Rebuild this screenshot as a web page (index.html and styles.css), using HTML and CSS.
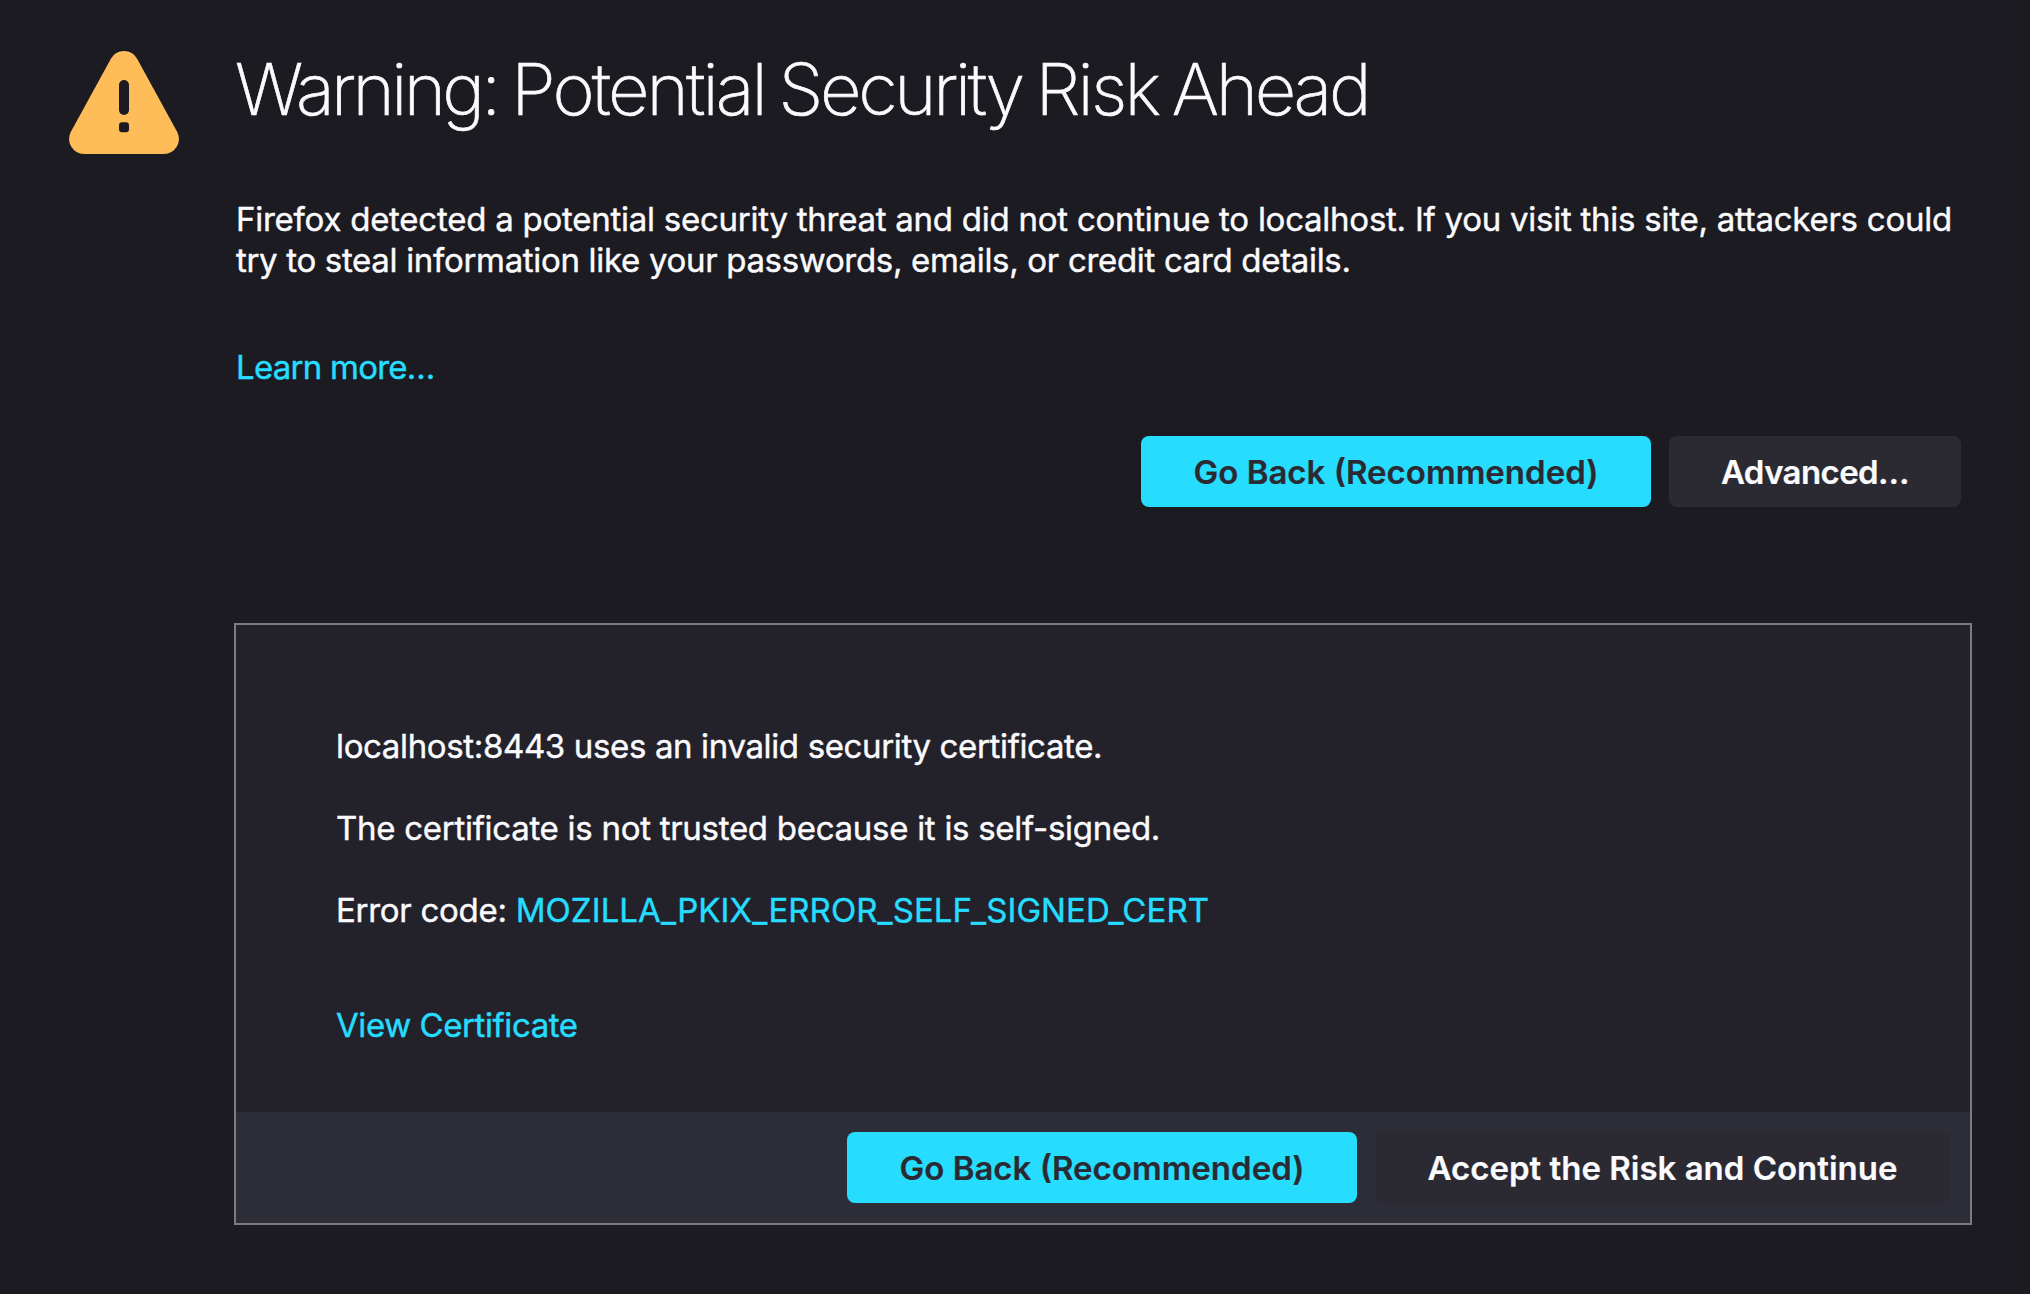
FILE: index.html
```
<!DOCTYPE html>
<html lang="en">
<head>
<meta charset="utf-8">
<title>Warning: Potential Security Risk Ahead</title>
<link rel="stylesheet" href="styles.css">
</head>
<body>
<main class="page">
  <svg class="warning-icon" viewBox="0 0 110 104" aria-hidden="true">
    <path class="triangle" d="M41.9 7.8A15 15 0 0 1 68.1 7.8L108.1 80.8A15 15 0 0 1 95 103H15A15 15 0 0 1 1.9 80.8Z"/>
    <rect class="mark" x="50" y="29" width="10" height="35" rx="5"/>
    <rect class="mark" x="50" y="71.3" width="10" height="10" rx="3"/>
  </svg>
  <div class="content">
    <h1 class="title"><span class="tight">Warning:</span> <span class="loose">Potential</span> Security <span class="loose">Risk</span> Ahead</h1>
    <p class="intro">Firefox detected a potential security threat and did not continue to localhost. If you visit this site, attackers could<br><span class="second-line">try to steal information like your passwords, emails, or credit card details.</span></p>
    <a class="link learn">Learn more…</a>
    <div class="actions">
      <button class="button primary">Go Back (Recommended)</button>
      <button class="button advanced">Advanced…</button>
    </div>
    <section class="panel">
      <div class="details">
        <p class="host">localhost:8443 uses an invalid security certificate.</p>
        <p>The certificate is not trusted because it is self-signed.</p>
        <p>Error code: <a class="link code">MOZILLA_PKIX_ERROR_SELF_SIGNED_CERT</a></p>
        <p class="certificate"><a class="link">View Certificate</a></p>
      </div>
      <div class="panel-actions">
        <button class="button primary">Go Back (Recommended)</button>
        <button class="button accept">Accept the Risk and Continue</button>
      </div>
    </section>
  </div>
</main>
</body>
</html>
```
FILE: styles.css
```
* { box-sizing: border-box; }
body { margin: 0; background: #1c1b22; color: #fbfbfe; font: 400 33px/41px Inter, sans-serif; letter-spacing: -0.28px; -webkit-text-stroke: 0.4px currentColor; }
.page { display: flex; height: 1294px; padding: 51px 58px 0 69px; overflow: hidden; }
.warning-icon { width: 110px; height: 104px; flex: none; }
.triangle { fill: #ffbd5a; }
.mark { fill: #1c1b22; }
.content { flex: 1; margin-left: 55px; min-width: 0; }
.title { margin: -2px 0 0 1px; font-size: 72px; line-height: 80px; font-weight: 200; letter-spacing: -3.3px; word-spacing: -3.3px; white-space: nowrap; -webkit-text-stroke-width: 0.7px; }
.tight { letter-spacing: -3.6px; }
.loose { letter-spacing: -2.85px; }
.intro { margin: 70px 0 0 2px; white-space: nowrap; letter-spacing: -0.25px; }
.second-line { letter-spacing: -0.32px; }
.link { color: #26ddff; }
.learn { display: block; margin: 66px 0 0 2px; letter-spacing: -0.75px; }
.actions { display: flex; justify-content: flex-end; gap: 18px; margin: 48px 11px 0 0; }
.button { height: 71px; padding: 1px 0 0; border: 0; border-radius: 8px; font: 600 33px/41px Inter, sans-serif; letter-spacing: 0; color: #fbfbfe; background: #2b2a33; -webkit-text-stroke: 0.2px currentColor; }
.primary { width: 510px; background: #26ddff; color: #2b2a33; }
.advanced { width: 292px; letter-spacing: -0.6px; }
.panel { margin-top: 116px; height: 602px; border: 2px solid #7c7b80; background: #23222b; display: flex; flex-direction: column; }
.details { flex: 1; padding: 101px 100px 0; }
.details p { margin: 0 0 41px; }
.details .host { letter-spacing: -0.36px; }
.code { letter-spacing: 0.08px; }
.details .certificate { margin-top: 74px; letter-spacing: -0.42px; }
.panel-actions { display: flex; gap: 18px; justify-content: flex-end; height: 111px; padding: 20px 20px 0; background: #2d2d37; }
.accept { width: 575px; }
```
